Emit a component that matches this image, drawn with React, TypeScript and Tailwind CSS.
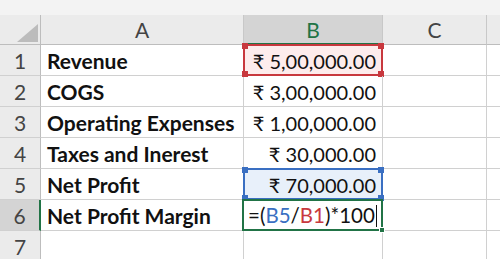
import React from "react";

type Ref = "red" | "blue" | null;

const rows: { label: string; value: React.ReactNode; ref?: Ref; active?: boolean }[] = [
  { label: "Revenue", value: "₹ 5,00,000.00", ref: "red" },
  { label: "COGS", value: "₹ 3,00,000.00" },
  { label: "Operating Expenses", value: "₹ 1,00,000.00" },
  { label: "Taxes and Inerest", value: "₹ 30,000.00" },
  { label: "Net Profit", value: "₹ 70,000.00", ref: "blue" },
  { label: "Net Profit Margin", value: null, active: true },
];

const Handles = ({ color }: { color: string }) => (
  <>
    <span className={`absolute -left-[3px] -top-[3px] w-[6px] h-[6px] ${color}`} />
    <span className={`absolute -right-[3px] -top-[3px] w-[6px] h-[6px] ${color}`} />
    <span className={`absolute -left-[3px] -bottom-[3px] w-[6px] h-[6px] ${color}`} />
    <span className={`absolute -right-[3px] -bottom-[3px] w-[6px] h-[6px] ${color}`} />
  </>
);

export default function App() {
  return (
    <div className="w-[500px] h-[259px] overflow-hidden bg-white font-['Lato','Noto_Sans',sans-serif] text-[20px] text-[#111]">
      <div className="h-[15px] bg-[#f3f3f3]" />
      <div className="grid grid-cols-[41px_203px_139px_104px_1fr] auto-rows-[31px] grid-rows-[30px]">
        {/* header row */}
        <div className="relative bg-[#ebebeb] border-r border-b border-[#bdbdbd]">
          <svg className="absolute left-[17px] top-[9px]" width="21" height="18" viewBox="0 0 21 18">
            <polygon points="0,18 21,18 21,0" fill="#bcbcbc" />
          </svg>
        </div>
        <div className="flex items-center justify-center pt-[1px] bg-[#ebebeb] border-r border-b border-[#c8c8c8] border-b-[#bdbdbd] text-[#444] text-[21px]">A</div>
        <div className="flex items-center justify-center pt-[1px] bg-[#d4d4d4] border-r border-[#c8c8c8] border-b-2 border-b-[#217346] text-[#217346] text-[21px]">B</div>
        <div className="flex items-center justify-center pt-[1px] bg-[#ebebeb] border-r border-b border-[#c8c8c8] border-b-[#bdbdbd] text-[#444] text-[21px]">C</div>
        <div className="bg-[#ebebeb] border-b border-[#bdbdbd]" />

        {rows.map((r, i) => (
          <React.Fragment key={r.label}>
            <div
              className={`flex items-center justify-center pt-[1px] text-[#444] text-[21px] border-b border-[#d0d0d0] ${
                r.active
                  ? "bg-[#d4d4d4] border-r-2 border-r-[#217346]"
                  : "bg-[#ebebeb] border-r border-r-[#bdbdbd]"
              }`}
            >
              {i + 1}
            </div>
            <div className="flex items-center pl-[6px] pt-[2px] text-[21px] font-bold whitespace-nowrap border-r border-b border-[#d0d0d0]">
              {r.label}
            </div>
            <div
              className={`relative flex items-center justify-end pr-[6px] pt-[1px] whitespace-nowrap border-r border-b border-[#d0d0d0] ${
                r.ref === "red" ? "bg-[#fdecec]" : r.ref === "blue" ? "bg-[#e8f0fa]" : ""
              }`}
            >
              {r.value}
              {r.ref === "red" && (
                <div className="absolute -left-[1px] -top-[1px] -right-[1px] -bottom-[1px] border-2 border-[#c8383e]">
                  <Handles color="bg-[#c8383e]" />
                </div>
              )}
              {r.ref === "blue" && (
                <div className="absolute -left-[1px] -top-[1px] -right-[1px] -bottom-[1px] border-2 border-[#3a6fc2]">
                  <Handles color="bg-[#3a6fc2]" />
                </div>
              )}
              {r.active && (
                <>
                  <div className="absolute inset-0 flex items-center pl-[4px] pt-[1px] text-[20.5px]">
                    <span>=(</span>
                    <span className="text-[#3a6fc2]">B5</span>
                    <span>/</span>
                    <span className="text-[#c8383e]">B1</span>
                    <span>)*100</span>
                    <span className="ml-[1px] w-[1px] h-[22px] bg-[#111]" />
                  </div>
                  <div className="absolute -left-[2px] -top-[1px] -right-[1px] -bottom-[1px] border-2 border-[#217346]">
                    <span className="absolute -right-[4px] -bottom-[4px] w-[6px] h-[6px] bg-[#217346] border border-white" />
                  </div>
                </>
              )}
            </div>
            <div className="border-r border-b border-[#d0d0d0]" />
            <div className="border-b border-[#d0d0d0]" />
          </React.Fragment>
        ))}
        <div className="flex items-center justify-center pt-[1px] bg-[#ebebeb] text-[#444] text-[21px] border-r border-[#bdbdbd] border-b border-b-[#d0d0d0]">7</div>
        <div className="border-r border-b border-[#d0d0d0]" />
        <div className="border-r border-b border-[#d0d0d0]" />
        <div className="border-r border-b border-[#d0d0d0]" />
        <div className="border-b border-[#d0d0d0]" />
      </div>
    </div>
  );
}
